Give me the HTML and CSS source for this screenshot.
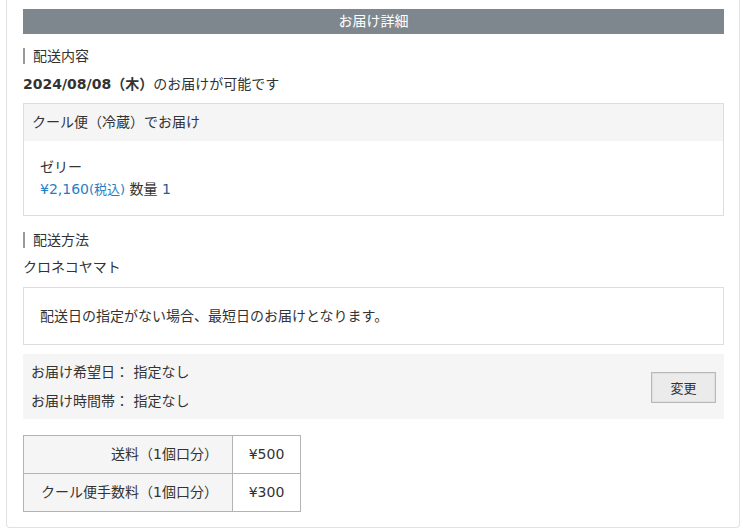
FILE: index.html
```html
<!DOCTYPE html>
<html lang="ja">
<head>
<meta charset="utf-8">
<link rel="stylesheet" href="styles.css">
</head>
<body>
<div class="panel">
  <div class="title">お届け詳細</div>
  <div class="label">配送内容</div>
  <div class="date"><b>2024/08/08（木）</b>のお届けが可能です</div>
  <div class="box">
    <div class="box-head">クール便（冷蔵）でお届け</div>
    <div class="box-body">
      <div class="item">ゼリー</div>
      <div class="price"><span class="yen">¥2,160</span><span class="tax">(税込)</span> <span class="qty">数量</span> <span class="num">1</span></div>
    </div>
  </div>
  <div class="label label-2">配送方法</div>
  <div class="carrier">クロネコヤマト</div>
  <div class="notice">配送日の指定がない場合、最短日のお届けとなります。</div>
  <div class="wish">
    <div class="wish-lines">
      <div>お届け希望日： 指定なし</div>
      <div>お届け時間帯： 指定なし</div>
    </div>
    <button class="change">変更</button>
  </div>
  <table class="fees">
    <tr><th>送料（1個口分）</th><td>¥500</td></tr>
    <tr><th>クール便手数料（1個口分）</th><td>¥300</td></tr>
  </table>
</div>
</body>
</html>
```
FILE: styles.css
```css
html, body {
  margin: 0;
  padding: 0;
  background: #fff;
}
body {
  font-family: "DejaVu Sans", "Noto Sans CJK JP", sans-serif;
  font-size: 14px;
  color: #333;
  line-height: 1.4;
}
.panel {
  margin: 0 3px 0 6px;
  height: 528px;
  box-sizing: border-box;
  border: 1px solid #e2e2e2;
  border-top: none;
  border-radius: 0 0 4px 4px;
  padding: 9px 15px 0 16px;
}
.title {
  background: #7f878e;
  color: #fff;
  text-align: center;
  height: 25px;
  line-height: 24px;
  font-size: 14px;
}
.label {
  margin-top: 14px;
  border-left: 2px solid #999;
  padding-left: 8px;
  line-height: 16px;
  height: 16px;
}
.label-2 {
  margin-top: 16px;
}
.date {
  margin-top: 10px;
  line-height: 20px;
}
.date b {
  font-weight: bold;
}
.box {
  margin-top: 9px;
  border: 1px solid #ddd;
}
.box-head {
  background: #f5f5f5;
  height: 37px;
  line-height: 36px;
  padding-left: 8px;
}
.box-body {
  padding: 15px 16px 14px;
}
.item {
  line-height: 22px;
}
.price {
  line-height: 22px;
}
.yen {
  color: #1f7fc8;
}
.tax {
  color: #1f7fc8;
  font-size: 13px;
}
.qty {
  color: #333;
}
.num {
  color: #245c96;
}
.carrier {
  margin-top: 9px;
  line-height: 20px;
}
.notice {
  margin-top: 10px;
  border: 1px solid #ddd;
  height: 56px;
  line-height: 56px;
  padding-left: 16px;
}
.wish {
  margin-top: 9px;
  background: #f5f5f5;
  height: 65px;
  display: flex;
  align-items: center;
  justify-content: space-between;
  padding: 0 8px 0 8px;
}
.wish-lines {
  display: flex;
  flex-direction: column;
  gap: 8px;
  line-height: 21px;
}
.change {
  width: 65px;
  height: 31px;
  margin-top: 1px;
  background: #ebebeb;
  border: 1px solid #b8b8b8;
  box-shadow: inset 0 0 0 1px #e0e0e0;
  font-family: inherit;
  font-size: 13px;
  color: #333;
  padding: 0;
}
.fees {
  margin-top: 16px;
  border-collapse: collapse;
}
.fees th, .fees td {
  border: 1px solid #b3b3b3;
  height: 37px;
  padding: 0;
  font-weight: normal;
}
.fees th {
  background: #f5f5f5;
  width: 194px;
  text-align: right;
  padding-right: 14px;
  padding-left: 0;
}
.fees td {
  width: 67px;
  text-align: center;
}
```
